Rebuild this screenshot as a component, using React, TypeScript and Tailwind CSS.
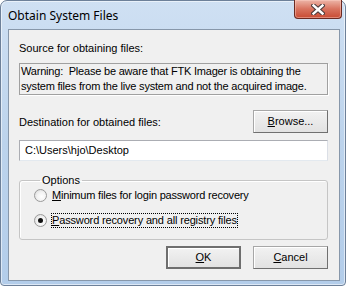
import React from "react";

const ui = { fontFamily: '"Liberation Sans", Arial, sans-serif' };

function Btn({ children, isDefault = false }: { children: React.ReactNode; isDefault?: boolean }) {
  return (
    <button
      className={
        "w-[75px] h-[23px] flex items-center justify-center text-[11px] leading-[13px] text-black bg-gradient-to-b from-[#f2f2f2] to-[#e2e2e2] " +
        (isDefault
          ? "border-2 border-[#6e6e6e] shadow-[inset_1px_1px_0_#ffffff]"
          : "border border-[#a7a7a7] border-b-[#707070] border-r-[#707070] shadow-[inset_1px_1px_0_#ffffff]")
      }
    >
      {children}
    </button>
  );
}

function Radio({ checked }: { checked?: boolean }) {
  return (
    <span className="w-[13px] h-[13px] rounded-full border border-[#9a9a9a] bg-[radial-gradient(circle_at_60%_60%,#ffffff_0%,#f3f3f3_45%,#d6d6d6_100%)] flex items-center justify-center shrink-0">
      {checked && <span className="w-[5px] h-[5px] rounded-full bg-[#111111]" />}
    </span>
  );
}

export default function App() {
  return (
    <div className="w-[346px] h-[287px] bg-white" style={ui}>
      <div className="w-[346px] h-[286px] rounded-t-[7px] rounded-b-[4px] border border-[#6d8099] bg-gradient-to-b from-[#cfe0f3] via-[#bcd3ec] to-[#b3cdea] shadow-[inset_0_0_0_1px_rgba(255,255,255,0.55)] flex flex-col">
        {/* title bar */}
        <div className="h-[28px] flex justify-between items-start">
          <span
            className="ml-[7px] mt-[7px] text-[12px] leading-[15px] text-black"
            style={{ fontFamily: '"Noto Sans", "Open Sans", sans-serif' }}
          >
            Obtain System Files
          </span>
          <div className="-mt-px mr-[3px] w-[48px] h-[19px] rounded-b-[4px] border border-t-0 border-[#6b2a22] bg-gradient-to-b from-[#ecb5a8] via-[#d8735f] to-[#c84a32] shadow-[inset_0_0_0_1px_rgba(255,210,200,0.45)] flex items-center justify-center">
            <svg width="14" height="11" viewBox="0 0 14 11">
              <path d="M2.5 1.5 L11.5 9.5 M11.5 1.5 L2.5 9.5" stroke="#4a3a3a" strokeWidth="4.5" strokeLinecap="square" />
              <path d="M2.5 1.5 L11.5 9.5 M11.5 1.5 L2.5 9.5" stroke="#ffffff" strokeWidth="2.4" strokeLinecap="square" />
            </svg>
          </div>
        </div>

        {/* client area */}
        <div className="ml-[7px] mr-[5px] mb-[4px] flex-1 border border-[#8797aa] bg-[#f0f0f0] pl-[10px] pr-[11px] flex flex-col text-[11px] leading-[13px] text-black">
          <div className="mt-[12px]">Source for obtaining files:</div>

          <div className="mt-[8px] h-[32px] border border-[#a0a0a0] shadow-[1px_1px_0_#ffffff] pl-[1px] leading-[15px] tracking-[-0.2px] whitespace-nowrap">
            <div>Warning:&nbsp; Please be aware that FTK Imager is obtaining the</div>
            <div>system files from the live system and not the acquired image.</div>
          </div>

          <div className="mt-[15px] flex items-end justify-between">
            <span className="mb-[4px]">Destination for obtained files:</span>
            <Btn>
              <span>
                <span className="underline">B</span>rowse...
              </span>
            </Btn>
          </div>

          <div className="mt-[7px] h-[21px] border border-[#abadb3] border-r-[#dbdfe6] border-b-[#e3e9ef] bg-white pl-[5px] flex items-center">
            C:\Users\hjo\Desktop
          </div>

          <fieldset className="mt-[13px] h-[66px] border border-[#c5c5c5] rounded-[3px] shadow-[inset_1px_1px_0_#ffffff] pl-[14px] flex flex-col">
            <legend className="ml-[6px] px-[2px]">Options</legend>
            <div className="mt-[1px] h-[15px] flex items-center gap-[4px]">
              <Radio />
              <span className="pl-[1px] tracking-[-0.2px]">
                <span className="underline">M</span>inimum files for login password recovery
              </span>
            </div>
            <div className="mt-[10px] h-[15px] flex items-center gap-[4px]">
              <Radio checked />
              <span className="border border-dotted border-black leading-[13px] tracking-[-0.15px]">
                <span className="underline">P</span>assword recovery and all registry files
              </span>
            </div>
          </fieldset>

          <div className="mt-[6px] flex justify-end gap-[12px]">
            <Btn isDefault>
              <span>
                <span className="underline">O</span>K
              </span>
            </Btn>
            <Btn>
              <span>
                <span className="underline">C</span>ancel
              </span>
            </Btn>
          </div>
        </div>
      </div>
    </div>
  );
}
